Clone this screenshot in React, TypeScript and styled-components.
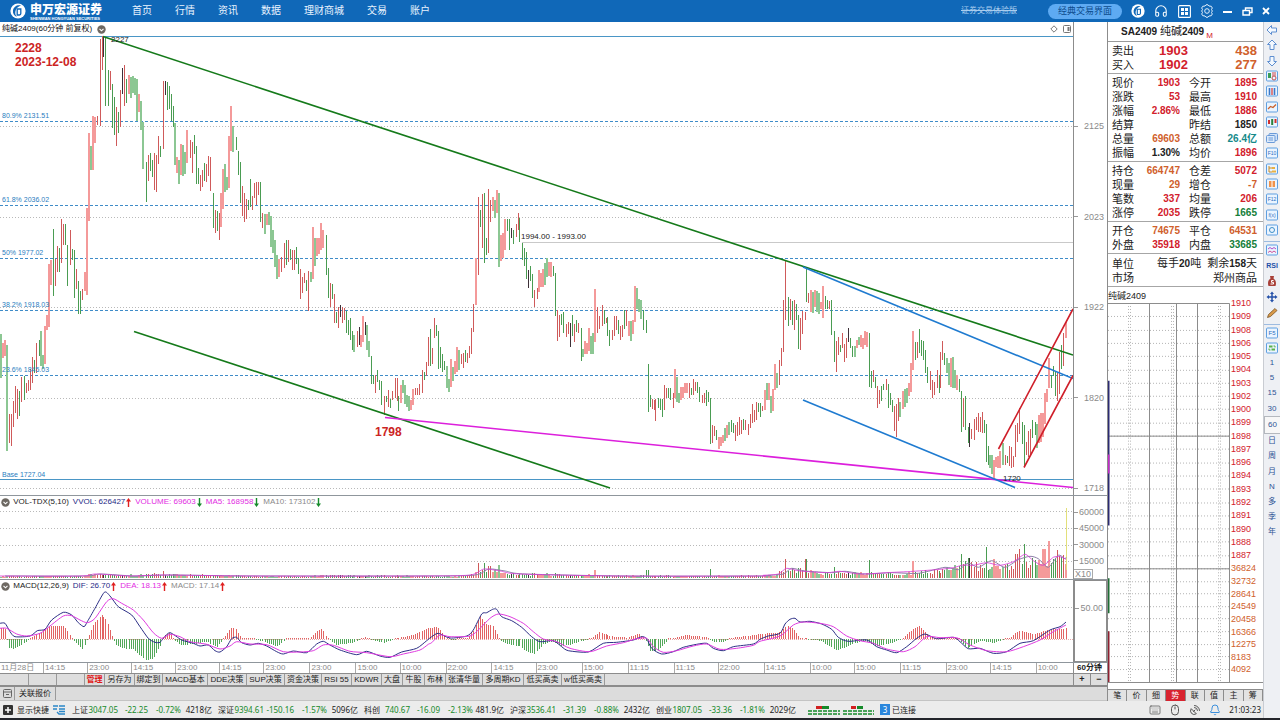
import React from "react";
import styled, { createGlobalStyle, css } from "styled-components";
import { Headphones, Bell, Keyboard, SatelliteDish, Mouse } from "lucide-react";

const SANS = `"Liberation Sans", "Noto Sans CJK SC", sans-serif`;
const HUMANIST = `"Noto Sans", "Noto Sans CJK SC", sans-serif`;

const RED = "#d2202c";
const ORANGE = "#d0602c";
const GREEN = "#15803a";
const MAGENTA = "#e22be2";
const NAVY = "#1f2a86";
const BLUE = "#2a7dc0";

const GlobalStyle = createGlobalStyle`
  *, *::before, *::after { box-sizing: border-box; }
  body { margin: 0; background: #fff; color: #222; font: 9px/14px ${SANS}; }
  button { margin: 0; padding: 0; border: 0; background: none; color: inherit; font: inherit; cursor: pointer; white-space: nowrap; }
  table { border-collapse: collapse; border-spacing: 0; }
  td, th { padding: 0; font-weight: 400; }
  svg { display: block; }
`;

/* ---------- chart data ---------- */

type Bar = { x: number; hi: number; lo: number; kind: string };

/* Bars as "<offset><kind><high>-<low>"; offset counts thirds of a pixel from the block start. */
const parseBars = (start: number, text: string): Bar[] =>
  text.trim().split(/\s+/).map((t) => {
    const m = /^(\d+)([rgplk])(\d+)-(\d+)$/.exec(t)!;
    return { x: Math.round(start + Number(m[1]) / 3), kind: m[2], hi: Number(m[3]), lo: Number(m[4]) };
  });

const BARS: Bar[] = [
  ...parseBars(0, `
  2l334-378 9p343-358 15p340-356 21l345-451 28r414-443 34r414-446 40r401-427 46r386-413 52r389-419 58g391-416 64r377-402 73g376-400
  79r383-393 85r380-391 91r369-390 97r357-383 103g360-373 109r343-373 116g340-356 122l331-366 128l355-369 134p326-364 140p315-330
  147p264-327 153p260-285 160g229-296 166r259-286 172r246-272 178g248-272 184r219-263 190r224-245 196g224-245 202g245-286 210r230-265
  216g249-260 223g250-298 229r269-289 235g281-314 241g291-314 247r289-300 254p272-291 261p208-295 267p133-221 273l146-170 279p116-170
  284p117-143 290r116-125 299r39-126 305r36-70 310k37-57 316g38-106 323g70-106 329r71-90 335g84-128 343g97-135 349r107-146 355g112-133
  361r90-127 367k68-94 373r65-106 379g79-103 387p75-94 393l77-98 399l76-93 405l78-95 411l79-121 417p94-112 423l101-130 429l122-169
  437g162-202 443r155-181 449g153-171 455g160-177 461r153-190 467r155-192 473r136-164 481g146-157 488r81-149 494k81-95 500g82-110
  506g86-109 512g94-121 518g106-127 525l123-165 531p157-173 537l160-184 543p144-175 549l145-176 555l152-174 561p130-163 569r140-158
  575r142-173 581g135-154 587g146-184 593g168-184 599r175-191 605r170-187 611g163-181 619r164-182 625r156-176 631r157-191 638g193-228
  644r210-233 650g211-231 656r213-240 663p193-227 669p169-209 674l164-192 681l177-190 687p136-188 693p106-151 699l126-152 707g137-150
  713g151-175 719g162-203 725r186-216 731r193-222 737r199-219 743g200-210 751g179-207 757r196-210 763r183-198 769r182-205 775r182-195
  781g182-222 787r213-228 795l214-234 801p214-225 807l212-225 813l216-247 819l230-253 825l240-267 831l255-279 837p259-277 844r257-272
  851r243-268 857g240-265 863r240-262 869g249-260 875r250-270 881r250-270 889g247-264 895g258-274 901r269-299 907r277-293 913r273-283
  919g280-291 925r271-311 933l272-282 939p227-279 945l238-266 951p238-256 957p238-254 963p223-250 969p230-248 977g235-275 983g268-298
  989r283-307 995g284-299 1001r294-323 1007g312-323 1013r307-328 1019k305-317 1027r307-323 1033r308-320 1039g311-333 1045g320-335
  1051g318-340 1057g331-350 1063l335-352 1070r331-347 1076k327-345 1083p335-347 1089p316-342 1095k322-335 1101l325-350 1107l341-357
  1114g356-384 1120g375-384 1126r375-393 1132g370-382 1138g380-390 1144g381-405 1151r396-415 1159g396-402 1165r390-407 1171g399-408
  1177r391-400 1184r378-398 1190r378-401 1195g396-411 1202p385-403 1208l380-393 1215l385-404 1221l395-407 1227l396-411 1233p400-410
  1239p389-405 1245r388-395 1251r388-395 1257r384-395 1265r370-393 1271g372-380 1277r362-376 1283r337-366`),
  ...parseBars(430, `
  1g329-366 7r348-364 13r318-338 19g325-336 25g331-369 31g347-368 37g354-372 43g361-370 50l366-388 57l379-392 63p359-387 69l367-381
  75p361-374 81p347-372 87l350-370 94r354-364 100r353-368 106g350-362 112r353-363 118r346-358 124r328-354 130r304-332 137p258-305
  145r197-275 151g210-227 157r194-248 163g193-263 169g238-255 175r189-253 181r200-222 189p197-211 195l200-218 201p190-213 207l193-267
  213p235-261 219p233-258 225p219-250 232g219-231 238g219-250 244k228-238 250g230-244 257r224-237 263r213-230 268g218-242 277g243-260
  283g248-266 289g252-279 295k270-288 301g266-281 307g274-298 313r290-307 320r288-299 327p270-292 333p273-287 339p269-287 345l263-285
  351l258-277 357p262-276 363p262-277 370g266-276 376g273-316 382r310-341 388r315-337 394g314-325 400g312-333 408r324-337 415r322-334
  421k323-347 427g315-336 433r324-342 439g320-332 445r323-333 452g328-361 458l349-357 464p341-354 470p343-354 477p328-351 483l336-354
  489l333-354 495p289-342 502r307-333 508r316-329 515r305-326 521g310-324 527r318-323 532g317-336 538g330-346 545r330-340 553r316-336
  559r316-330 565g320-334 571r326-340 577r325-337 583g310-329 589r310-326 597p321-336 603l321-341 609p320-334 615p286-322 621l288-309
  627l299-312 633l300-319 640g310-330 647g320-333 653g364-412 659g395-407 665r399-409 671r400-410 676r399-421 685g398-408 691g399-410
  697g399-417 703r385-410 709r388-398 715g388-398 721g388-400 728r393-408 735p369-398 741l377-402 747l393-403 753p387-400 759p387-398
  765p383-393 771p383-393 778r383-398 784g388-395 790r379-395 796r382-391 802g382-393 808g387-402 815r395-403 822r393-403 829g390-406
  835g392-402 841g398-444 847r425-443 853r426-436 859g430-440 866p437-449 872p437-446 878p435-443 884l428-441 890p425-438 896l422-435
  904g420-432 910g423-433 916r425-441 922r422-436 928r417-435 934r420-434 940g419-430 946r420-430 953r424-435 961r414-428 967r404-423
  973r410-422 979r402-420 985g403-412 991g403-417 997r406-411 1005p390-410 1011l383-400 1017p383-400 1023l396-413 1029p389-411
  1035p364-390 1041l373-388 1048r360-385 1054r348-366 1060r300-352 1066r261-320 1073g297-326 1079r299-320 1085g301-325 1093r300-330
  1099g304-320 1105g315-349 1111r318-350 1117r311-334 1124r312-320`),
  ...parseBars(740, `
  199g267-302 205r293-303 212p290-312 218l292-313 225p290-307 231l291-312 238l293-314 244p302-309 249p286-318 256g296-309 262g300-309
  268r301-309 274g300-335 281g331-362 287r341-372 293r337-355 301g345-352 307r333-348 313r344-362 319r338-358 325k328-342 331g338-348
  337g346-357 344l346-357 350p340-348 356l337-345 362p335-347 369p338-349 375p331-345 381p332-347 388g333-387 394g371-388 400r370-382
  406g377-388 412r386-408 418r390-404 424g386-401 430g384-390 438r379-390 445g384-408 451g393-405 457g400-412 463r406-431 469r404-437
  475r398-421 481l402-417 488p391-409 494l389-407 500l388-403 506p383-396 512p363-392 519p331-370 525g342-360 532r342-358 538g329-353
  544g340-356 550g341-360 556g350-373 562g367-383 570r371-390 577r380-398 583r382-395 590r370-388 596g375-393 601r352-388 607r341-360
  613g353-365 620l358-373 626l363-385 632p358-387 638l357-388 644l370-388 650p375-390 657g379-392 664g391-432 670r398-427 676g396-430
  683g427-443 688k423-447 694r429-439 701r419-440 709r417-430 715r413-432 721r417-432 727r412-433 733g420-433 739g424-462 745g446-465
  751l455-468 757l455-474 763p460-479 769p457-467 775p456-468 781p451-468 788l443-465 795r455-465 801g456-463 808r446-466 814r447-468
  820r456-467 826r425-457 832r423-442 838r408-434 847g422-444 853g425-466 859r442-455 865r431-457 871r429-455 877g420-438 884g422-435
  890l424-448 896p415-443 902p413-442 908p413-437 914p393-424 920p389-402 926p358-388 932g375-388 938g366-376 944g372-396 952r372-401
  958r352-394 964g345-369 970r333-366 979p322-338`),
];

const BAR_COLOR: Record<string, string> = { r: "#cf5a5a", g: "#4a9c52", p: "#f49a9a", l: "#8cc793", k: "#3d3038" };
const isWide = (k: string) => k === "p" || k === "l";

type Pt = [number, number];
/* Samples in thirds of a pixel, placed from the block start. */
const block = (ox: number, oy: number, v: number[]): Pt[] => {
  const out: Pt[] = [];
  for (let i = 0; i < v.length; i += 2) out.push([ox + v[i] / 3, oy + v[i + 1] / 3]);
  return out;
};

const smooth = (p: Pt[]) => {
  let d = `M${p[0][0].toFixed(1)} ${p[0][1].toFixed(1)}`;
  for (let i = 0; i < p.length - 1; i++) {
    const a = p[Math.max(0, i - 1)], b = p[i], c = p[i + 1], e = p[Math.min(p.length - 1, i + 2)];
    const c1 = [b[0] + (c[0] - a[0]) / 8, b[1] + (c[1] - a[1]) / 8];
    const c2 = [c[0] - (e[0] - b[0]) / 8, c[1] - (e[1] - b[1]) / 8];
    d += `C${c1[0].toFixed(1)} ${c1[1].toFixed(1)} ${c2[0].toFixed(1)} ${c2[1].toFixed(1)} ${c[0].toFixed(1)} ${c[1].toFixed(1)}`;
  }
  return d;
};

const DIF: Pt[] = [
  ...block(0, 490, [0, 400, 15, 400, 30, 425, 45, 440, 90, 438, 112, 422, 135, 418, 155, 390, 190, 367, 215, 375, 235, 398, 252, 410, 262, 395, 285, 355, 313, 307, 330, 318, 355, 350, 395, 375, 420, 410, 445, 445, 465, 457, 480, 457, 490, 445, 510, 428, 545, 450, 580, 460, 600, 468, 625, 465, 645, 482, 660, 486, 680, 470, 695, 446, 710, 442, 725, 458, 750, 465, 775, 460, 800, 468, 830, 485, 850, 492, 880, 483, 920, 488, 950, 462, 970, 454, 990, 465, 1020, 480, 1070, 494, 1100, 484, 1140, 498, 1170, 502, 1205, 486, 1250, 475, 1280, 452]),
  ...block(430, 490, [5, 440, 25, 430, 60, 444, 110, 438, 130, 420, 155, 372, 170, 368, 188, 358, 200, 358, 215, 380, 245, 392, 275, 412, 305, 440, 330, 455, 370, 452, 395, 470, 415, 482, 475, 486, 520, 460, 560, 457, 610, 450, 635, 440, 650, 446, 665, 475, 695, 492, 730, 485, 760, 472, 800, 463, 830, 460, 850, 475, 880, 482, 910, 470, 970, 462]),
  ...block(760, 500, [0, 418, 25, 408, 60, 400, 75, 372, 90, 358, 105, 355, 120, 366, 150, 364, 185, 372, 215, 388, 235, 412, 265, 424, 320, 420, 350, 440, 380, 450, 410, 458, 440, 440, 470, 415, 495, 402, 530, 416, 580, 412, 600, 425, 625, 446, 660, 445, 700, 460, 740, 455, 780, 430, 820, 422, 870, 390, 900, 380, 918, 366]),
];
const DEA: Pt[] = [
  ...block(0, 490, [0, 415, 20, 415, 50, 432, 80, 438, 120, 430, 150, 408, 190, 378, 215, 377, 240, 390, 262, 398, 285, 385, 320, 335, 340, 326, 365, 340, 400, 360, 430, 390, 460, 428, 485, 445, 510, 433, 540, 440, 570, 455, 620, 463, 660, 477, 690, 468, 710, 455, 750, 462, 800, 464, 850, 485, 900, 486, 940, 482, 970, 465, 1000, 466, 1050, 484, 1100, 488, 1170, 500, 1210, 492, 1260, 480, 1285, 463]),
  ...block(430, 490, [5, 458, 30, 435, 60, 440, 120, 438, 150, 415, 180, 385, 205, 372, 240, 380, 280, 400, 310, 425, 340, 447, 380, 455, 420, 475, 480, 485, 530, 468, 580, 458, 620, 446, 650, 445, 670, 470, 700, 487, 740, 482, 790, 468, 830, 462, 870, 478, 920, 475, 970, 466]),
  ...block(760, 500, [0, 424, 60, 408, 100, 375, 130, 366, 180, 370, 220, 380, 260, 408, 300, 422, 340, 430, 380, 447, 430, 455, 465, 440, 500, 410, 540, 413, 590, 413, 630, 435, 680, 452, 740, 455, 790, 440, 840, 420, 880, 395, 918, 375]),
];
const HIST: Pt[] = [
  ...block(0, 0, [0, 35, 15, 30, 25, -25, 40, -30, 70, -15, 90, 0, 110, 15, 150, 38, 190, 38, 210, 12, 225, -10, 250, -33, 262, 0, 280, 45, 305, 72, 320, 55, 345, -15, 370, -28, 400, -30, 420, -50, 440, -65, 460, -58, 480, -20, 490, 10, 510, 18, 525, -5, 545, -20, 580, -15, 620, -8, 650, -25, 670, 0, 690, 32, 705, 35, 725, 0, 760, -1, 790, -8, 830, -22, 860, 0, 930, 2, 950, 25, 965, 30, 985, 0, 1010, -18, 1060, -10, 1095, 6, 1110, -2, 1150, -12, 1190, 2, 1240, 12, 1285, 33]),
  ...block(430, 0, [5, 34, 20, 38, 45, 8, 60, -3, 110, 2, 130, 25, 150, 70, 165, 45, 190, 38, 210, -6, 240, -17, 270, -22, 290, -38, 312, -45, 340, -15, 365, -8, 395, -22, 420, -17, 450, -8, 480, 0, 510, 22, 540, 8, 590, 4, 625, 15, 645, 0, 660, -35, 680, -38, 715, 0, 770, 12, 830, 5, 850, -10, 880, -10, 900, 3, 960, 10]),
  ...block(760, 0, [0, 15, 60, 20, 80, 42, 100, 30, 120, 0, 180, -5, 230, -35, 270, -18, 310, -5, 350, -22, 400, -10, 425, 0, 440, 15, 475, 40, 510, 8, 540, -1, 595, 1, 620, -28, 660, -5, 700, -12, 750, 5, 775, 25, 820, 15, 870, 28, 918, 32]),
];
const VOLUME: Pt[] = [
  [0, 2], [84, 2], [88, 4], [108, 4], [120, 3], [160, 4], [200, 3], [240, 2], [300, 2], [330, 3], [420, 2], [466, 2], [474, 6], [490, 8],
  [505, 5], [530, 4], [590, 3], [700, 2], [775, 3], [784, 9], [800, 8], [820, 5], [860, 5], [900, 5], [940, 8], [965, 14], [985, 13],
  [1000, 12], [1020, 15], [1035, 15], [1048, 14], [1056, 20], [1073, 16],
];
const SPIKES: Record<string, number> = {
  "163": 7, "478": 15, "484": 15, "489": 12, "499": 13, "555": 5, "595": 8, "647": 8, "710": 9, "786": 19, "806": 19, "833": 11,
  "869": 18, "913": 17, "961": 24, "969": 20, "986": 31, "994": 19, "1016": 24, "1020": 29, "1024": 34, "1032": 20, "1044": 29, "1049": 37, "1057": 28,
};
const VOL_MA: Pt[] = [
  [0, 576], [80, 576], [96, 574], [130, 576], [165, 575], [250, 576], [420, 576], [470, 575], [484, 569], [500, 571], [520, 574], [620, 576], [757, 576],
  ...block(760, 500, [10, 226, 55, 222, 80, 205, 120, 213, 200, 218, 240, 214, 300, 222, 380, 218, 460, 214, 540, 208, 580, 203, 610, 195, 640, 196, 680, 188, 720, 196, 760, 185, 795, 163, 820, 182, 850, 196, 880, 172, 900, 170, 918, 178]),
];
const VOL_MA10: Pt[] = VOL_MA.map(([x, y], i) => [Math.min(1066, x + 5), y + (i % 2 ? 1 : -1) * (x > 900 ? 2 : 0)]);

const valueAt = (pts: Pt[], x: number) => {
  for (let i = 1; i < pts.length; i++) {
    if (x <= pts[i][0]) {
      const [x0, y0] = pts[i - 1], [x1, y1] = pts[i];
      return y0 + ((y1 - y0) * (x - x0)) / (x1 - x0 || 1);
    }
  }
  return pts[pts.length - 1][1];
};
const wobble = (i: number) => Math.abs(Math.sin(i * 12.9898) * 43758.5453) % 1;

const volumeHeight = (b: Bar, i: number) => {
  const spike = Object.keys(SPIKES).find((k) => Math.abs(Number(k) - b.x) < 1.1);
  if (spike) return SPIKES[spike];
  return Math.max(1, Math.round(valueAt(VOLUME, b.x) * (0.55 + 0.7 * wobble(i))));
};

/* ---------- page frame ---------- */

const Page = styled.div`display: flex; flex-direction: column; min-height: 100vh;`;

const Header = styled.header`
  display: flex; align-items: center; height: 22px; flex: none; background: #1068b8; color: #fff;
`;
const Brand = styled.div`display: flex; align-items: center; gap: 4px; width: 132px; padding-left: 10px;`;
const BrandText = styled.div`display: flex; flex-direction: column; padding-top: 2px; font-weight: 700; white-space: nowrap;`;
const BrandName = styled.span`font-size: 12px; line-height: 12px; font-weight: 900;`;
const BrandSub = styled.span`font-size: 4px; line-height: 5px;`;
const Nav = styled.nav`display: flex; gap: 23px; flex: 1; font-size: 10px;`;
const NavLink = styled.a`color: #eaf4ff; text-decoration: none; white-space: nowrap;`;
const Account = styled.span`margin-right: 31px; font-size: 8px; color: #a9cdee; text-decoration: line-through; white-space: nowrap;`;
const ModeButton = styled.button`
  width: 74px; height: 15px; margin-right: 9px; border-radius: 8px; background: #5eaaf2; color: #0c4a8c; font-size: 9px; line-height: 15px;
`;
const HeaderTools = styled.div`display: flex; align-items: center; justify-content: space-between; width: 149px; padding-right: 10px;`;

const Body = styled.div`display: flex; flex: 1;`;
const Desk = styled.div`display: flex; flex-direction: column; flex: 1; min-width: 0;`;
const Columns = styled.div`display: flex; flex: 1;`;
const ChartColumn = styled.main`display: flex; flex-direction: column; flex: 1; min-width: 0;`;

/* ---------- charts ---------- */

const Panel = styled.section<{ $h?: number }>`
  display: flex; border-bottom: 1px solid #8f969c;
  ${(p) => (p.$h ? css`flex: none; height: ${p.$h}px;` : css`flex: 1; min-height: 474px;`)}
`;
const Plot = styled.div`position: relative; flex: 1; min-width: 0; overflow: hidden;`;
const PlotSvg = styled.svg`position: absolute; inset: 0; width: 100%; height: 100%;`;
const Scale = styled.div<{ $top: number; $bottom: number; $boxed?: boolean }>`
  display: flex; flex-direction: column; justify-content: space-between; align-items: flex-end; flex: none; width: 34px;
  padding: ${(p) => p.$top}px 3px ${(p) => p.$bottom}px 0;
  border: 0 solid #8c8c8c; border-left-width: 1px;
  ${(p) => p.$boxed && css`border-width: 1px 1px 1px 2px;`}
  color: #8a8a8a; font-size: 9px; line-height: 10px;
`;
const ScaleMark = styled.span<{ $tall?: boolean }>`
  display: flex; justify-content: space-between; align-items: center; width: 100%; height: ${(p) => (p.$tall ? 16 : 10)}px;
  &::before { content: ""; width: 4px; height: 1px; background: #999; }
`;
const Unit = styled.span`align-self: flex-start; padding: 0 1px; border: 1px solid #aaa; border-left: 0; font-size: 9px; line-height: 8px;`;

const Legend = styled.div`
  position: relative; display: flex; align-items: center; height: 12px; gap: 4px; padding-left: 1px; font-size: 8px; line-height: 12px; white-space: nowrap;
`;
const LegendItem = styled.span<{ $c?: string }>`display: inline-flex; align-items: center; gap: 1px; color: ${(p) => p.$c || "#222"};`;
const ChartTitle = styled.h1`
  position: relative; display: flex; align-items: center; gap: 5px; height: 14px; margin: 0; padding: 0 2px 0 2px; font-size: 8px; font-weight: 400; line-height: 14px; color: #111;
`;
const TitleTools = styled.span`display: flex; gap: 5px; margin-left: auto;`;

const Note = styled.span<{ $x: number; $y: number; $kind?: "big" | "fib" }>`
  position: absolute; left: ${(p) => (p.$x / 1073) * 100}%; top: ${(p) => ((p.$y - 22) / 473) * 100}%;
  transform: translateY(-50%); white-space: pre; font-size: 8px; line-height: 14px; color: #222;
  ${(p) => p.$kind === "big" && css`font-size: 12px; font-weight: 700; color: #cc2424;`}
  ${(p) => p.$kind === "fib" && css`font-size: 7px; color: ${BLUE};`}
`;

const TimeRow = styled.div`display: flex; height: 10px; flex: none; color: #8a8a8a; font-size: 8px; line-height: 10px;`;
const TimeCell = styled.span<{ $w: number; $first?: boolean }>`
  flex: ${(p) => p.$w} 1 0; min-width: 0; padding-left: 1px; white-space: nowrap; border-left: ${(p) => (p.$first ? "0" : "1px solid #aaa")};
`;
const Period = styled.span`width: 34px; flex: none; padding-left: 3px; border-left: 1px solid #8c8c8c; font-weight: 700; font-size: 8px; color: #222; white-space: nowrap;`;

const TabRow = styled.div`
  display: flex; height: 14px; flex: none; background: #dedede; border-top: 1px solid #8c8c8c; border-bottom: 2px solid #8c8c8c;
`;
const IndicatorTab = styled.button<{ $w: number; $on?: boolean }>`
  width: ${(p) => p.$w}px; border-right: 1px solid #9a9a9a; font-size: 8px; line-height: 11px; color: ${(p) => (p.$on ? "#e01818" : "#222")};
  overflow: hidden; ${(p) => p.$on && css`font-weight: 700;`}
`;
const ZoomButtons = styled.div`display: flex; margin-left: auto; width: 34px;`;
const ZoomButton = styled.button`flex: 1; border-left: 1px solid #8c8c8c; font-size: 9px; font-weight: 700; line-height: 11px;`;
const RelatedRow = styled.div`display: flex; height: 14px; flex: none; background: #dcdcdc; border-bottom: 1px solid #c4c4c4;`;
const RelatedTab = styled.button<{ $w: number }>`
  display: flex; align-items: center; justify-content: center; width: ${(p) => p.$w}px; border-right: 1px solid #9a9a9a; font-size: 8px;
`;

const RoundToggle = () => (
  <svg width="9" height="9" viewBox="0 0 9 9">
    <circle cx="4.5" cy="4.5" r="4.2" fill="#6d6862" />
    <path d="M2.5 3.8l2 2 2-2" fill="none" stroke="#fff" strokeWidth="1.1" />
  </svg>
);
const Arrow = ({ up }: { up?: boolean }) => (
  <svg width="5" height="9" viewBox="0 0 5 9">
    {up ? <path d="M2.5 0L5 3.5H3.2V9H1.8V3.5H0z" fill="#e02020" /> : <path d="M2.5 9L5 5.5H3.2V0H1.8v5.5H0z" fill="#158a2a" />}
  </svg>
);

const Grid = ({ ys }: { ys: number[] }) => (
  <>{ys.map((y) => <line key={y} x1="0" x2="1073" y1={y} y2={y} stroke="#b9b9b9" strokeDasharray="1 2" />)}</>
);

const FIBS: [number, string][] = [
  [121, "80.9% 2131.51"], [205, "61.8% 2036.02"], [258, "50% 1977.02"], [310, "38.2% 1918.03"], [375, "23.6% 1845.03"],
];

const PricePanel = () => (
  <Panel>
    <Plot>
      <PlotSvg viewBox="0 22 1073 473" preserveAspectRatio="none">
        <g transform="translate(0 .5)"><Grid ys={[126, 217, 307, 398, 488]} /></g>
        <g fill="none" strokeWidth="1" transform="translate(0 .5)">
          {FIBS.map(([y]) => <line key={y} x1="0" x2="1073" y1={y} y2={y} stroke="#3f8cc8" strokeDasharray="3 2" />)}
          <path d="M0 36H1073" stroke="#4a96c6" />
          <path d="M0 479H1073" stroke="#4a96c6" />
          <path d="M522 242H1073" stroke="#c9c9c9" />
        </g>
        <g shapeRendering="crispEdges">
          {BARS.map((b, i) => (
            <rect key={i} x={isWide(b.kind) ? b.x - 1 : b.x} width={isWide(b.kind) ? 2 : 1} y={b.hi} height={b.lo - b.hi} fill={BAR_COLOR[b.kind]} />
          ))}
        </g>
        <g fill="none" strokeWidth="1.6">
          <path d="M103 36.5L1073 355" stroke="#157a1a" />
          <path d="M134 331.5L610 488" stroke="#157a1a" />
          <path d="M385 417.5L1073 487.5" stroke="#dc1fdc" />
          <path d="M803 267L1073 378.5M803 400L1015 487.5" stroke="#1f7bd0" />
          <path d="M998.5 449L1073 309M1024 467.5L1073 375.5" stroke="#cf1f2a" />
        </g>
      </PlotSvg>
      <ChartTitle>
        纯碱2409(60分钟 前复权) <RoundToggle />
        <TitleTools>
          <svg width="8" height="8" viewBox="0 0 8 8"><path d="M4 .8L7.2 4 4 7.2.8 4z" fill="none" stroke="#777" /></svg>
          <svg width="8" height="8" viewBox="0 0 8 8"><rect x=".5" y=".5" width="7" height="7" rx="1" fill="none" stroke="#777" /><rect x="4.5" y="2" width="2" height="4" fill="#777" /></svg>
        </TitleTools>
      </ChartTitle>
      <Note $x={111} $y={40}>2227</Note>
      <Note $x={15} $y={55} $kind="big">{"2228\n2023-12-08"}</Note>
      {FIBS.map(([y, t]) => <Note key={t} $x={2} $y={y - 5} $kind="fib">{t}</Note>)}
      <Note $x={2} $y={475} $kind="fib">Base 1727.04</Note>
      <Note $x={521} $y={237}>1994.00 - 1993.00</Note>
      <Note $x={375} $y={432} $kind="big">1798</Note>
      <Note $x={1003} $y={479}>1720</Note>
    </Plot>
    <Scale $top={99} $bottom={2}>
      {["2125", "2023", "1922", "1820", "1718"].map((v) => <ScaleMark key={v}>{v}</ScaleMark>)}
    </Scale>
  </Panel>
);

const VolumePanel = () => (
  <Panel $h={84}>
    <Plot>
      <PlotSvg viewBox="0 496 1073 83" preserveAspectRatio="none">
        <g transform="translate(0 .5)"><Grid ys={[511, 528, 545, 561]} /></g>
        <g shapeRendering="crispEdges">
          {BARS.map((b, i) => {
            const h = volumeHeight(b, i);
            return <rect key={i} x={isWide(b.kind) ? b.x - 1 : b.x} width={isWide(b.kind) ? 2 : 1} y={578 - h} height={h} fill={BAR_COLOR[b.kind]} />;
          })}
          <rect x="1066" y="508" width="1" height="62" fill="#e3e07a" />
        </g>
        <path d={smooth(VOL_MA10)} fill="none" stroke="#8d7fa8" />
        <path d={smooth(VOL_MA)} fill="none" stroke="#d63ad6" strokeWidth=".8" />
      </PlotSvg>
      <Legend>
        <LegendItem><RoundToggle />&nbsp;VOL-TDX(5,10)</LegendItem>
        <LegendItem $c={NAVY}>VVOL: 626427<Arrow up /></LegendItem>
        <LegendItem $c={MAGENTA}>VOLUME: 69603<Arrow /></LegendItem>
        <LegendItem $c={MAGENTA}>MA5: 168958<Arrow /></LegendItem>
        <LegendItem $c="#8a8a8a">MA10: 173102<Arrow /></LegendItem>
      </Legend>
    </Plot>
    <Scale $top={8} $bottom={0}>
      {["60000", "45000", "30000", "15000"].map((v) => <ScaleMark key={v} $tall>{v}</ScaleMark>)}
      <Unit>X10</Unit>
    </Scale>
  </Panel>
);

const MacdPanel = () => (
  <Panel $h={83}>
    <Plot>
      <PlotSvg viewBox="0 580 1073 82" preserveAspectRatio="none">
        <g transform="translate(0 .5)"><Grid ys={[607]} /></g>
        <path d="M0 639.5H1073" stroke="#e7a9a9" strokeDasharray="1 1" />
        <g shapeRendering="crispEdges">
          {BARS.map((b, i) => {
            const v = Math.round(valueAt(HIST, b.x));
            const h = Math.max(1, Math.abs(v));
            return <rect key={i} x={b.x} width={1} y={v >= 0 ? 639 - h : 639} height={h} fill={v >= 0 ? "#e26464" : "#53a85b"} />;
          })}
        </g>
        <path d={smooth(DIF)} fill="none" stroke="#2d2f86" />
        <path d={smooth(DEA)} fill="none" stroke="#e03be0" />
      </PlotSvg>
      <Legend>
        <LegendItem><RoundToggle />&nbsp;MACD(12,26,9)</LegendItem>
        <LegendItem $c={NAVY}>DIF: 26.70<Arrow up /></LegendItem>
        <LegendItem $c={MAGENTA}>DEA: 18.13<Arrow up /></LegendItem>
        <LegendItem $c="#8a8a8a">MACD: 17.14<Arrow up /></LegendItem>
      </Legend>
    </Plot>
    <Scale $top={22} $bottom={0} $boxed><ScaleMark>50.00</ScaleMark></Scale>
  </Panel>
);

const TIMES: [string, number][] = [
  ["11月28日", 44], ["14:15", 44], ["23:00", 44], ["14:15", 44], ["23:00", 44], ["14:15", 44], ["23:00", 46], ["23:00", 46], ["15:00", 44],
  ["10:00", 46], ["22:00", 46], ["14:15", 44], ["23:00", 46], ["15:00", 46], ["11:15", 46], ["11:15", 44], ["22:00", 46], ["14:15", 46],
  ["10:00", 44], ["15:00", 46], ["11:15", 46], ["23:00", 44], ["14:15", 46], ["10:00", 37],
];
const TABS: [string, number][] = [
  ["", 29], ["", 28], ["", 28], ["管理", 20], ["另存为", 30], ["绑定到", 28], ["MACD基本", 45], ["DDE决策", 39], ["SUP决策", 38], ["资金决策", 37],
  ["RSI 55", 30], ["KDWR", 30], ["大盘", 21], ["牛股", 22], ["布林", 21], ["张清华量", 37], ["多周期KD", 41], ["低买高卖", 38], ["w低买高卖", 43],
];

/* ---------- quote panel ---------- */

const Quote = styled.aside`display: flex; flex-direction: column; flex: none; width: 156px; border-left: 1px solid #8c8c8c; background: #fff;`;
const QuoteTitle = styled.h2`
  height: 20px; margin: 0; padding-left: 13px; border-bottom: 1px solid #9a9a9a; font-size: 10px; font-weight: 700; line-height: 18px; color: #222; white-space: nowrap;
  span { font-size: 11px; font-weight: 400; }
  sub { margin-left: 2px; font-size: 8px; line-height: 8px; font-weight: 400; color: ${RED}; }
`;
const QuoteSection = styled.section`padding: 2px 6px 1px 4px; border-bottom: 1px solid #a6a6a6;`;
const QuoteTable = styled.table`
  width: 100%; table-layout: fixed;
  tr { height: 14px; }
  th { font-size: 11px; line-height: 14px; text-align: left; color: #222; white-space: nowrap; }
`;
const Key = styled.th<{ $pad?: boolean }>`width: ${(p) => (p.$pad ? 34 : 24)}px; padding-left: ${(p) => (p.$pad ? 9 : 0)}px;`;
const Val = styled.td<{ $c?: string; $big?: boolean; $w?: number }>`
  ${(p) => p.$w && css`width: ${p.$w}px;`}
  text-align: right; white-space: nowrap; font-weight: 700; line-height: 14px; font-size: ${(p) => (p.$big ? 13 : 10)}px; color: ${(p) => p.$c || "#222"};
`;
const Wide = styled.td`text-align: right; white-space: nowrap; font-size: 11px; line-height: 14px; color: #222; b { font-size: 10px; }`;

type Row = [string, string, string, string, string, string];
const K = "#222";
const STATS: Row[][] = [
  [
    ["现价", "1903", RED, "今开", "1895", RED], ["涨跌", "53", RED, "最高", "1910", RED], ["涨幅", "2.86%", RED, "最低", "1886", RED],
    ["结算", "", K, "昨结", "1850", K], ["总量", "69603", ORANGE, "总额", "26.4亿", "#168a8a"], ["振幅", "1.30%", K, "均价", "1896", RED],
  ],
  [
    ["持仓", "664747", ORANGE, "仓差", "5072", RED], ["现量", "29", ORANGE, "增仓", "-7", ORANGE],
    ["笔数", "337", RED, "均量", "206", RED], ["涨停", "2035", RED, "跌停", "1665", GREEN],
  ],
  [["开仓", "74675", ORANGE, "平仓", "64531", ORANGE], ["外盘", "35918", RED, "内盘", "33685", GREEN]],
];

const TickTitle = styled.h3`height: 16px; margin: 0; font-size: 9px; font-weight: 400; line-height: 18px; color: #222;`;
const TickBody = styled.div`display: flex; flex: 1; border-bottom: 1px solid #8c8c8c;`;
const TickPlot = styled.div`position: relative; flex: 1;`;
const TickScale = styled.div`display: flex; flex-direction: column; width: 32px; margin-top: -5px; padding-bottom: 5px; font-size: 9px; line-height: 10px;`;
const TickLabels = styled.div<{ $c: string; $grow: number }>`
  display: flex; flex-direction: column; flex: ${(p) => p.$grow} 1 0; color: ${(p) => p.$c};
  span { flex: 1; }
`;
const PRICES = [1910, 1909, 1908, 1906, 1905, 1904, 1903, 1902, 1900, 1899, 1898, 1897, 1896, 1894, 1893, 1892, 1891, 1890, 1888, 1887];
const VOLUMES = [36824, 32732, 28641, 24549, 20458, 16366, 12275, 8183, 4092];

const QuoteTabs = styled.div`display: flex; height: 12px; margin-top: 6px; border-top: 1px solid #8c8c8c; background: #e2e2e2;`;
const QuoteTab = styled.button<{ $on?: boolean }>`
  flex: 1; border-right: 1px solid #8c8c8c; font-size: 8px; line-height: 11px;
  ${(p) => p.$on && css`background: #d8232f; color: #fff;`}
`;

const QuotePanel = () => (
  <Quote>
    <QuoteTitle>SA2409 <span>纯碱</span>2409<sub>M</sub></QuoteTitle>
    <QuoteSection>
      <QuoteTable><tbody>
        <tr><Key scope="row">卖出</Key><Val $big $w={52} $c={RED}>1903</Val><Val $big $c={ORANGE}>438</Val></tr>
        <tr><Key scope="row">买入</Key><Val $big $w={52} $c={RED}>1902</Val><Val $big $c={ORANGE}>277</Val></tr>
      </tbody></QuoteTable>
    </QuoteSection>
    {STATS.map((rows, i) => (
      <QuoteSection key={i}>
        <QuoteTable><tbody>
          {rows.map((r) => (
            <tr key={r[0]}>
              <Key scope="row">{r[0]}</Key><Val $w={44} $c={r[2]}>{r[1]}</Val>
              <Key scope="row" $pad>{r[3]}</Key><Val $c={r[5]}>{r[4]}</Val>
            </tr>
          ))}
        </tbody></QuoteTable>
      </QuoteSection>
    ))}
    <QuoteSection>
      <QuoteTable><tbody>
        <tr><Key scope="row">单位</Key><Wide>每手<b>20</b>吨&nbsp; 剩余<b>158</b>天</Wide></tr>
        <tr><Key scope="row">市场</Key><Wide>郑州商品</Wide></tr>
      </tbody></QuoteTable>
    </QuoteSection>
    <TickTitle>纯碱2409</TickTitle>
    <TickBody>
      <TickPlot>
        <PlotSvg viewBox="0 302 123 380" preserveAspectRatio="none">
          <g fill="none" stroke="#b4b4b4" strokeDasharray="1 2">
            {PRICES.map((p, i) => <path key={p} d={`M0 ${Math.round(302 + i * 13.3) + 0.5}H121`} />)}
            {VOLUMES.map((p, i) => <path key={p} d={`M0 ${Math.round(568 + i * 12.6) + 0.5}H121`} />)}
            <path d="M20.5 302V682M22.5 302V682M63.5 302V682M65.5 302V682M110.5 302V682M112.5 302V682" />
          </g>
          <path d="M0 302.5H121.5V682M41.5 302V682M68.5 302V682M89.5 302V682M0 435.5H122M0 568.5H122" fill="none" stroke="#8c8c8c" />
          <path d="M.5 380V525" stroke="#2b2b72" strokeWidth="2" />
          <path d="M.5 454V473" stroke="#c62bc6" strokeWidth="2" />
          <path d="M.5 578V613" stroke="#1f6e35" strokeWidth="2" />
          <path d="M.5 631V682" stroke="#8e2030" strokeWidth="2" />
        </PlotSvg>
      </TickPlot>
      <TickScale>
        <TickLabels $c={RED} $grow={266}>{PRICES.map((p) => <span key={p}>{p}</span>)}</TickLabels>
        <TickLabels $c={ORANGE} $grow={114}>{VOLUMES.map((p) => <span key={p}>{p}</span>)}</TickLabels>
      </TickScale>
    </TickBody>
    <QuoteTabs>
      {["笔", "价", "细", "势", "联", "值", "主", "筹"].map((t) => <QuoteTab key={t} $on={t === "势"}>{t}</QuoteTab>)}
    </QuoteTabs>
  </Quote>
);

/* ---------- side toolbar ---------- */

const SideBar = styled.div`display: flex; flex-direction: column; flex: none; width: 17px; padding-bottom: 2px; background: #eef0f4; border-left: 1px solid #c9ccd2;`;
const SideGroup = styled.div<{ $h: number }>`
  display: flex; flex-direction: column; height: ${(p) => p.$h}px;
  & + & { margin-top: 3px; border-top: 1px solid #9dbbe0; }
`;
const SideButton = styled.button<{ $on?: boolean; $bold?: boolean }>`
  display: flex; flex: 1; align-items: center; justify-content: center; color: #2f5596; font-size: 8px; line-height: 12px;
  ${(p) => p.$on && css`border: 1px solid #b4b8be; border-right: 0; background: #f7f7f7;`}
  ${(p) => p.$bold && css`font-weight: 700; font-size: 7px; color: #2450a8;`}
`;

const Framed = ({ children }: { children?: React.ReactNode }) => (
  <svg width="12" height="12" viewBox="0 0 12 12" fill="none">
    <rect x=".5" y="1" width="11" height="10" rx="1" fill="#eaf4ff" stroke="#5f9fe0" />
    {children}
  </svg>
);
const FrameText = ({ t, size = 6 }: { t: string; size?: number }) => (
  <text x="6" y="8" textAnchor="middle" fontSize={size} fontFamily="Liberation Sans" fill="#2b6cc0">{t}</text>
);
const ArrowIcon = ({ turn }: { turn: number }) => (
  <svg width="12" height="12" viewBox="0 0 12 12">
    <path d="M6 1L10.5 5.5H8V10.5H4V5.5H1.5z" fill="#f4f9ff" stroke="#5f8fd0" transform={`rotate(${turn} 6 6)`} />
  </svg>
);

const DRAW_ICONS: [string, React.ReactNode][] = [
  ["后退", <ArrowIcon turn={-90} />],
  ["上移", <ArrowIcon turn={0} />],
  ["下移", <ArrowIcon turn={180} />],
  ["分时", <Framed><path d="M2 3h3v5H2z" fill="#3a9c58" /><path d="M6 3h4M6 5h4" stroke="#d04848" /><circle cx="8" cy="8" r="2" stroke="#c05050" /></Framed>],
  ["列表", <Framed><path d="M3.5 3v7M8.5 3v7" stroke="#3a78c8" strokeWidth="1.6" /><path d="M6 3v7" stroke="#d85050" strokeWidth="1.4" /></Framed>],
  ["走势", <Framed><path d="M2 8l2.5-2.5L7 6.5l3-3" stroke="#c9602a" strokeWidth="1.2" /></Framed>],
  ["K线", <Framed><path d="M3 4v4M9.5 3v4" stroke="#d03030" strokeWidth="2" /><path d="M6.2 3v6" stroke="#28803c" strokeWidth="2" /></Framed>],
  ["多窗", <svg width="12" height="12" viewBox="0 0 12 12"><rect x="3" y="1.5" width="8.5" height="7" rx="1" fill="#cfe1f8" stroke="#6a9ad8" /><rect x=".5" y="3.5" width="8.5" height="7" rx="1" fill="#dceafb" stroke="#6a9ad8" /><path d="M2.5 6H7M2.500 8H7" stroke="#6a9ad8" /></svg>],
  ["F10", <Framed><FrameText t="F10" size={5} /></Framed>],
  ["结构", <Framed><path d="M3 3v6h3M3 5h3" stroke="#c98a20" /><path d="M6 4h3v2H6zM6 7.5h4v2H6z" fill="#e9b040" /></Framed>],
  ["报表", <Framed><path d="M3 3h6v6H3z" fill="#f0924a" /><path d="M6 3v6" stroke="#fff" /></Framed>],
  ["F12", <Framed><FrameText t="F12" size={5} /></Framed>],
  ["公式", <Framed><FrameText t="f(x)" size={5} /></Framed>],
  ["刷新", <Framed><circle cx="6" cy="6" r="2.5" stroke="#3d8fc8" /></Framed>],
];
const TOOL_ICONS: [string, React.ReactNode][] = [
  ["波浪", <Framed><path d="M2 5l2-1.5L6 5l2-1.5L10 5" stroke="#b050c8" /><path d="M2 8.5L4 7l2 1.5L8 7l2 1.5" stroke="#d0509a" /></Framed>],
  ["RSI", "RSI"],
  ["资金", <svg width="12" height="12" viewBox="0 0 12 12"><path d="M4 1h4L7.5 3.5C10 5 10.5 8 9.500 11h-7C1.5 8 2 5 4.5 3.5z" fill="#a84038" /><path d="M7.5 5.5h-2v1.8h2V9h-3" stroke="#fff" fill="none" /></svg>],
  ["移动", <svg width="12" height="12" viewBox="0 0 12 12"><path d="M6 .5l2 2.500H4zM6 11.5L4 9h4zM.5 6L3 4v4zM11.5 6L9 8V4z" fill="#2450a8" /><path d="M6 2v8M2 6h8" stroke="#2450a8" strokeWidth="1.5" /></svg>],
  ["画线", <svg width="12" height="12" viewBox="0 0 12 12"><path d="M1.5 10.5l1-3L9 1.5l2 2-6.500 6z" fill="#d99a4a" stroke="#7a5426" strokeWidth=".8" /></svg>],
];
const PERIODS: [string, React.ReactNode][] = [
  ["F5", <Framed><FrameText t="F5" /></Framed>],
  ["切换", <Framed><path d="M3 3.500h3.500v2H3zM5.500 6.500H9v2H5.500z" fill="#5ab04a" /><path d="M7.5 4H9v1.500M4.500 8H3V6.500" stroke="#5ab04a" /></Framed>],
  ...["1", "5", "15", "30", "60", "日", "周", "月", "N", "多", "季", "年"].map((t): [string, React.ReactNode] => [t, t]),
];

/* ---------- status bar ---------- */

const StatusBar = styled.footer`
  display: flex; align-items: center; flex: none; height: 17px; background: #ececec; color: #222; font-family: ${HUMANIST}; font-size: 8px; line-height: 16px; white-space: nowrap;
`;
const Shortcut = styled.div`display: flex; align-items: center; gap: 4px; width: 72px; padding-left: 3px;`;
const Ticker = styled.div`
  display: grid; grid-template-columns: 16px 30px 30px 33px 31px; width: 146px; flex: none; text-align: right; color: #158a2a;
`;
const TickerName = styled.span`color: #222; text-align: left;`;
const TickerSum = styled.span`color: #222;`;
const Signals = styled.svg`margin: 0 6px 0 6px; flex: none;`;
const Link = styled.span`display: flex; align-items: center; gap: 2px;`;
const LinkCount = styled.b`width: 10px; height: 11px; background: #2a86dc; color: #fff; font-weight: 400; line-height: 11px; text-align: center;`;
const Tray = styled.div`display: flex; align-items: center; gap: 8px; margin-left: auto; padding-right: 2px; color: #555;`;
const Clock = styled.time`color: #222;`;
const Edge = styled.div`height: 2px; flex: none; background: #23252b;`;

const TICKERS = [
  ["上证", "3047.05", "-22.25", "-0.72%", "4218亿"], ["深证", "9394.61", "-150.16", "-1.57%", "5096亿"],
  ["科创", "740.67", "-16.09", "-2.13%", "481.9亿"], ["沪深", "3536.41", "-31.39", "-0.88%", "2432亿"],
  ["创业", "1807.05", "-33.36", "-1.81%", "2029亿"],
];

const Swirl = ({ size }: { size: number }) => (
  <svg width={size} height={size} viewBox="0 0 16 16">
    <circle cx="8" cy="8" r="7.6" fill="#fff" />
    <path d="M11 2.600C7.500 1.400 3.600 3.600 3 7.400c-.4 3 1.300 5.600 4 6.600-1.500-1.600-2-3.600-1.600-5.600C5.800 5.800 8 3.600 11 2.600z" fill="#1068b8" />
    <path d="M7.200 6h3.600v4.600c0 .8-.6 1.400-1.400 1.400H7.200z" fill="none" stroke="#1068b8" strokeWidth="1.300" />
  </svg>
);

export default function App() {
  return (
    <Page>
      <GlobalStyle />
      <Header>
        <Brand>
          <Swirl size={16} />
          <BrandText><BrandName>申万宏源证券</BrandName><BrandSub>SHENWAN HONGYUAN SECURITIES</BrandSub></BrandText>
        </Brand>
        <Nav>{["首页", "行情", "资讯", "数据", "理财商城", "交易", "账户"].map((t) => <NavLink key={t} href="#">{t}</NavLink>)}</Nav>
        <Account>证券交易体验版</Account>
        <ModeButton>经典交易界面</ModeButton>
        <HeaderTools>
          <Swirl size={14} />
          <Headphones size={14} strokeWidth={1.8} />
          <svg width="13" height="13" viewBox="0 0 13 13"><rect x=".6" y=".6" width="11.8" height="11.800" rx="1" fill="none" stroke="#fff" strokeWidth="1.100" /><path d="M3 3h3v3H3zM7 3h3v3H7zM3 7h3v3H3zM7 7h3v3H7z" fill="#fff" /></svg>
          <svg width="14" height="14" viewBox="0 0 14 14" fill="none" stroke="#e4f0fc" strokeLinejoin="round"><path d="M5 2L6 .8h2L9 2l2.300.3 1 1.700-.8 1.500.800 1.500-.000 .1-.8 1.400.8 1.500-1 1.700L9 12l-1 1.200H6L5 12l-2.300-.3-1-1.700.8-1.500L1.700 7l.8-1.500L1.700 4l1-1.700z" /><circle cx="7" cy="7" r="2.300" /></svg>
          <svg width="9" height="10" viewBox="0 0 9 10"><path d="M0 6h9" stroke="#fff" strokeWidth="2" /></svg>
          <svg width="11" height="9" viewBox="0 0 11 9" fill="none" stroke="#fff" strokeWidth="1.4"><path d="M3.500 3V1H10v4.500H7.500" /><path d="M1 3.500h6.500V8H1z" /></svg>
          <svg width="8" height="8" viewBox="0 0 8 8"><path d="M1 1l6 6M7 1L1 7" stroke="#fff" strokeWidth="1.8" /></svg>
        </HeaderTools>
      </Header>
      <Body>
        <Desk>
          <Columns>
            <ChartColumn>
              <PricePanel />
              <VolumePanel />
              <MacdPanel />
              <TimeRow>
                {TIMES.map(([t, w], i) => <TimeCell key={i} $w={w} $first={i === 0}>{t}</TimeCell>)}
                <Period>60分钟</Period>
              </TimeRow>
              <TabRow>
                {TABS.map(([t, w], i) => <IndicatorTab key={i} $w={w} $on={t === "管理"}>{t}</IndicatorTab>)}
                <ZoomButtons><ZoomButton>+</ZoomButton><ZoomButton>−</ZoomButton></ZoomButtons>
              </TabRow>
              <RelatedRow>
                <RelatedTab $w={15}>
                  <svg width="9" height="9" viewBox="0 0 9 9" fill="none" stroke="#666"><rect x=".5" y=".5" width="8" height="8" rx="1" /><path d="M1 3h7M3 5.5h3" /></svg>
                </RelatedTab>
                <RelatedTab $w={41}>关联报价</RelatedTab>
              </RelatedRow>
            </ChartColumn>
            <QuotePanel />
          </Columns>
          <StatusBar>
            <Shortcut>
              <svg width="10" height="10" viewBox="0 0 10 10"><rect width="10" height="10" rx="1" fill="#333" /><path d="M5 2v6M2 5h6" stroke="#fff" strokeWidth="1.5" /></svg>
              显示快捷
              <svg width="12" height="10" viewBox="0 0 12 10" fill="none" stroke="#2a86c8" strokeWidth="1.3"><path d="M0 1h5M0 4h4M6 1h6M6 4h6M4 7l2 2h6M6 6.5h6" /></svg>
            </Shortcut>
            {TICKERS.map((t) => (
              <Ticker key={t[0]}>
                <TickerName>{t[0]}</TickerName><span>{t[1]}</span><span>{t[2]}</span><span>{t[3]}</span><TickerSum>{t[4]}</TickerSum>
              </Ticker>
            ))}
            <Signals width="66" height="10" viewBox="0 0 66 10">
              <path d="M8 2.5h6M43 2.5h5" stroke="#d02020" strokeWidth="3" />
              <path d="M14 2.5h7M49 2.5h6" stroke="#158a2a" strokeWidth="3" />
              <path d="M0 6h32M35 6h31M0 9h32M35 9h31" stroke="#158a2a" strokeWidth="1.5" strokeDasharray="4 1" />
            </Signals>
            <Link><LinkCount>3</LinkCount>已连接</Link>
            <Tray>
              <Keyboard size={12} strokeWidth={1.5} />
              <Mouse size={12} strokeWidth={2} />
              <SatelliteDish size={12} strokeWidth={2} />
              <Bell size={12} strokeWidth={2} color="#3a8fdc" />
              <Clock>21:03:23</Clock>
            </Tray>
          </StatusBar>
        </Desk>
        <SideBar>
          <SideGroup $h={216}>{DRAW_ICONS.map(([n, icon]) => <SideButton key={n} aria-label={n}>{icon}</SideButton>)}</SideGroup>
          <SideGroup $h={80}>{TOOL_ICONS.map(([n, icon]) => <SideButton key={n} aria-label={n} $bold={n === "RSI"}>{icon}</SideButton>)}</SideGroup>
          <SideGroup $h={216}>{PERIODS.map(([n, icon]) => <SideButton key={n} aria-label={n} $on={n === "60"}>{icon}</SideButton>)}</SideGroup>
        </SideBar>
      </Body>
      <Edge />
    </Page>
  );
}
